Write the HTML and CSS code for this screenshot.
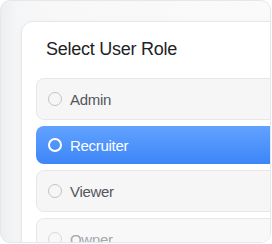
FILE: index.html
```html
<!DOCTYPE html>
<html lang="en">
<head>
    <meta charset="UTF-8">
    <meta name="viewport" content="width=device-width, initial-scale=1.0">
    <title>Select User Role</title>
    <link rel="stylesheet" href="styles.css">
</head>
<body>
    <div class="frame">
        <div class="card">
            <h2 class="title">Select User Role</h2>
            <div class="roles">
                <div class="role"><span class="radio"></span>Admin</div>
                <div class="role selected"><span class="radio"></span>Recruiter</div>
                <div class="role"><span class="radio"></span>Viewer</div>
                <div class="role faded"><span class="radio"></span>Owner</div>
            </div>
        </div>
    </div>
</body>
</html>
```

FILE: styles.css
```css
body { margin: 0; font-family: "Liberation Sans", Arial, sans-serif; background: #fff; }
.frame { width: 271px; height: 243px; box-sizing: border-box; border: 1px solid #e6e7ea; border-radius: 10px; overflow: hidden; padding: 20px 0 0 20px; background: linear-gradient(90deg, #eceef1 0%, #f5f6f7 6%, #f8f8f9 20%, #fafafa 100%); }
.card { width: 300px; height: 260px; box-sizing: border-box; background: #fff; border: 1px solid #e5e7eb; border-radius: 12px; padding: 16px 14px 0 14px; box-shadow: 0 2px 8px rgba(0, 0, 0, 0.04); }
.title { margin: 0 0 18px 10px; font-size: 18px; line-height: 22px; font-weight: 400; color: #222226; letter-spacing: -0.25px; }
.roles { display: flex; flex-direction: column; gap: 6px; }
.role { display: flex; align-items: center; gap: 8px; height: 42px; box-sizing: border-box; padding-left: 11px; background: #f6f6f7; border: 1px solid #e6e7ea; border-radius: 8px; font-size: 15px; letter-spacing: -0.3px; color: #55565c; }
.radio { width: 14px; height: 14px; box-sizing: border-box; border: 1.5px solid #c2c3c8; border-radius: 50%; }
.role.selected { height: 38px; border: none; padding-left: 12px; color: #fff; background: linear-gradient(180deg, #62a2ff 0%, #3d86f8 100%); }
.role.selected .radio { border: 2px solid #fff; }
.role.faded { color: #a6a7ad; background: #f8f8f9; }
.role.faded .radio { border-color: #d8d9dd; }
```
